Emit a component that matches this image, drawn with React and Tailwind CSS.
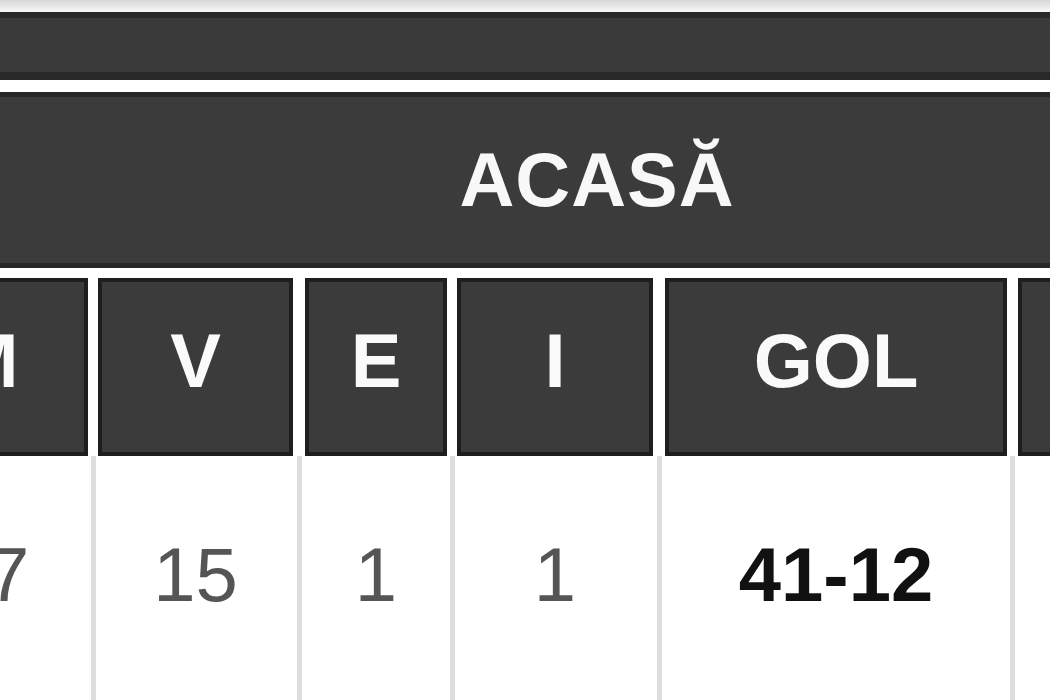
import React from "react";

const cols = [
  { cell: "w-[202px] shrink-0", gap: "", head: "M", val: "17", bold: false },
  { cell: "w-[195px] shrink-0", gap: "w-[10px]", head: "V", val: "15", bold: false },
  { cell: "w-[142px] shrink-0", gap: "w-[12px]", head: "E", val: "1", bold: false },
  { cell: "w-[196px] shrink-0", gap: "w-[10px]", head: "I", val: "1", bold: false },
  { cell: "w-[342px] shrink-0", gap: "w-[12px]", head: "GOL", val: "41-12", bold: true },
  { cell: "w-[200px] shrink-0", gap: "w-[11px]", head: "", val: "", bold: false },
];

export default function App() {
  return (
    <div
      className="w-[1050px] h-[700px] overflow-hidden bg-white"
      style={{ fontFamily: '"Liberation Sans", Arial, sans-serif' }}
    >
      <div className="h-[12px] bg-gradient-to-b from-[#d6d6d6] to-[#f8f8f8]" />
      <div className="h-[68px] bg-[#3a3a3a] border-t-[6px] border-b-[8px] border-[#292929]" />
      <div className="h-[12px] bg-white" />
      <div className="h-[176px] bg-[#3b3b3b] border-y-[5px] border-[#272727] flex items-center justify-center pl-[144px]">
        <span className="text-[76px] leading-none font-bold text-[#f8f8f8] tracking-[1px]">ACASĂ</span>
      </div>
      <div className="h-[10px] bg-white" />
      <div className="flex ml-[-114px] h-[178px]">
        {cols.map((c, i) => (
          <React.Fragment key={i}>
            {c.gap && <div className={c.gap + " shrink-0 bg-white"} />}
            <div
              className={
                c.cell +
                " bg-[#3b3b3b] border-[4px] border-[#1e1e1e] flex items-center justify-center pb-[12px]"
              }
            >
              <span className="text-[76px] leading-none font-bold text-[#fafafa]">{c.head}</span>
            </div>
          </React.Fragment>
        ))}
      </div>
      <div className="flex ml-[-114px] h-[244px] bg-white">
        {cols.map((c, i) => (
          <React.Fragment key={i}>
            {c.gap && (
              <div className={c.gap + " shrink-0 flex justify-center"}>
                <div className="w-[5px] h-full bg-[#dddddd]" />
              </div>
            )}
            <div className={c.cell + " flex items-center justify-center pb-[6px]"}>
              <span
                className={
                  c.bold
                    ? "text-[76px] leading-none font-bold text-[#111111]"
                    : "text-[76px] leading-none text-[#555555]"
                }
              >
                {c.val}
              </span>
            </div>
          </React.Fragment>
        ))}
      </div>
    </div>
  );
}
